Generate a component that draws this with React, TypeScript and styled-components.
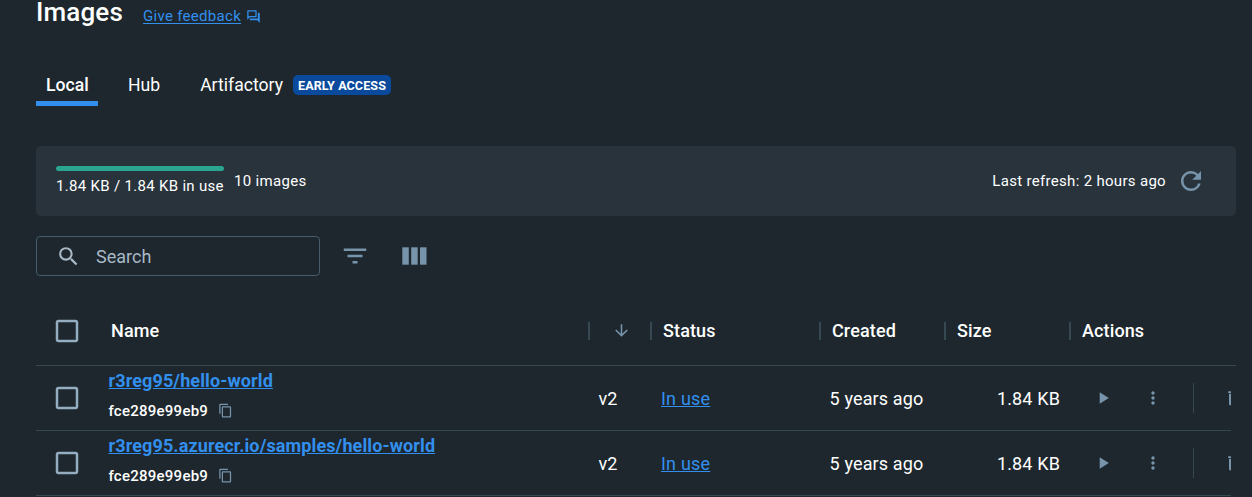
import React from "react";
import styled, { createGlobalStyle, css } from "styled-components";
import {
  MdOutlineQuestionAnswer,
  MdRefresh,
  MdSearch,
  MdFilterList,
  MdCheckBoxOutlineBlank,
  MdArrowDownward,
  MdContentCopy,
  MdPlayArrow,
  MdMoreVert,
  MdDelete,
} from "react-icons/md";

const color = {
  page: "#1d272d",
  panel: "#28333c",
  line: "#364852",
  text: "#ffffff",
  link: "#338fee",
  icon: "#7794ab",
  iconLight: "#94adc0",
  field: "#475c6d",
  hint: "#a9b9c6",
  green: "#2aa58f",
  badge: "#0a4a9c",
};

const GlobalStyle = createGlobalStyle`
  * { box-sizing: border-box; }
  body {
    margin: 0;
    background: ${color.page};
    color: ${color.text};
    font-family: Roboto, "Liberation Sans", sans-serif;
    overflow: hidden;
  }
  svg { display: block; flex: none; }
`;

const Page = styled.main`
  height: 497px;
  padding: 0 16px 0 36px;
  overflow: hidden;
  background: ${color.page};
`;

const Header = styled.header`
  display: flex;
  height: 66px;
  align-items: flex-start;
`;

const Title = styled.h1`
  width: 107px;
  margin: 0;
  font-size: 26px;
  font-weight: 500;
  letter-spacing: 0.15px;
  line-height: 24px;
`;

const Feedback = styled.a`
  display: flex;
  align-items: center;
  gap: 5px;
  height: 31px;
  color: ${color.link};
  font-size: 15px;
  letter-spacing: 0.3px;
  span { text-decoration: underline; text-underline-offset: 2px; }
  svg { position: relative; top: 1px; }
`;

const Tabs = styled.nav`
  display: flex;
  gap: 20px;
  height: 40px;
`;

const Tab = styled.div<{ $active?: boolean }>`
  display: flex;
  align-items: center;
  gap: 10px;
  height: 40px;
  padding: 0 10px 3px;
  font-size: 17.6px;
  ${(p) => p.$active && css`
    width: 62px;
    font-weight: 500;
    box-shadow: inset 0 -5px ${color.link};
  `}
`;

const Badge = styled.span`
  height: 20px;
  padding: 0 5px;
  border-radius: 5px;
  background: ${color.badge};
  font-size: 12.6px;
  font-weight: 700;
  letter-spacing: 0.07px;
  line-height: 21px;
`;

const Summary = styled.section`
  display: flex;
  align-items: center;
  height: 70px;
  margin-top: 40px;
  padding: 0 30px 0 20px;
  border-radius: 5px;
  background: ${color.panel};
  font-size: 15px;
  letter-spacing: 0.31px;
`;

const Usage = styled.div`
  width: 168px;
  margin-right: 10px;
  line-height: 20px;
  white-space: nowrap;
`;

const UsageBar = styled.div`
  height: 5px;
  margin: 0 0 5px;
  border-radius: 3px;
  background: ${color.green};
`;

const Refresh = styled.div`
  display: flex;
  align-items: center;
  gap: 10px;
  margin-left: auto;
  svg { color: ${color.icon}; }
`;

const Toolbar = styled.div`
  display: flex;
  align-items: center;
  height: 40px;
  margin-top: 20px;
  color: ${color.icon};
`;

const SearchField = styled.div`
  display: flex;
  align-items: center;
  gap: 15px;
  width: 284px;
  height: 40px;
  margin-right: 20px;
  padding-left: 19px;
  border: 1px solid ${color.field};
  border-radius: 4px;
  color: ${color.hint};
  font-size: 18px;
`;

const ToolButton = styled.div`
  margin-right: 30px;
`;

const gridColumns = css`
  display: grid;
  grid-template-columns: 62px 490px 62px 169px 125px 125px 1fr;
`;

const HeadRow = styled.div`
  ${gridColumns}
  align-items: center;
  height: 90px;
  padding-top: 20px;
  border-bottom: 1px solid ${color.line};
  font-size: 18px;
  font-weight: 500;
  letter-spacing: 0.12px;
`;

const HeadCell = styled.div<{ $divided?: boolean }>`
  display: flex;
  align-items: center;
  height: 18px;
  padding-left: ${(p) => (p.$divided ? 11 : 13)}px;
  border-left: ${(p) => (p.$divided ? `2px solid ${color.line}` : "0")};
`;

const SortCell = styled(HeadCell)`
  padding-left: 21.5px;
  color: ${color.icon};
`;

const Row = styled.div`
  ${gridColumns}
  align-items: center;
  width: 1195px;
  height: 65px;
  overflow: hidden;
  border-bottom: 1px solid ${color.line};
  font-size: 18px;
`;

const Check = styled.div`
  padding-left: 16px;
  color: ${color.iconLight};
`;

const NameCell = styled.div`
  height: 64px;
  padding: 4px 0 0 10.5px;
`;

const ImageLink = styled.a`
  display: block;
  color: ${color.link};
  font-weight: 700;
  letter-spacing: 0.12px;
  line-height: 22px;
  text-decoration: underline;
`;

const Digest = styled.div`
  display: flex;
  align-items: center;
  gap: 10px;
  height: 20px;
  margin-top: 8px;
  font-size: 15px;
  font-weight: 500;
  letter-spacing: 0.25px;
  line-height: 20px;
  span { padding-top: 2px; }
  svg { color: ${color.icon}; }
`;

const Cell = styled.div<{ $right?: boolean }>`
  padding: 0 ${(p) => (p.$right ? 9 : 0)}px 0 10.5px;
  letter-spacing: 0.15px;
  text-align: ${(p) => (p.$right ? "right" : "left")};
`;

const StatusLink = styled.a`
  margin-left: 0.5px;
  color: ${color.link};
  letter-spacing: 0.2px;
  text-decoration: underline;
`;

const Actions = styled.div`
  display: flex;
  align-items: center;
  color: ${color.icon};
`;

const Action = styled.div<{ $lead: number }>`
  margin-left: ${(p) => p.$lead}px;
`;

const ActionDivider = styled.div`
  flex: none;
  width: 1px;
  height: 30px;
  margin-left: 30px;
  background: ${color.line};
`;

const ColumnsIcon = () => (
  <svg width="30" height="30" viewBox="0 0 30 30" fill="currentColor">
    <rect x="2.3" y="6.3" width="6.5" height="17.4" />
    <rect x="11.2" y="6.3" width="6.5" height="17.4" />
    <rect x="20" y="6.3" width="6.5" height="17.4" />
  </svg>
);

const images = ["r3reg95/hello-world", "r3reg95.azurecr.io/samples/hello-world"];

export default function App() {
  return (
    <Page>
      <GlobalStyle />
      <Header>
        <Title>Images</Title>
        <Feedback>
          <span>Give feedback</span>
          <MdOutlineQuestionAnswer size={15} />
        </Feedback>
      </Header>
      <Tabs>
        <Tab $active>Local</Tab>
        <Tab>Hub</Tab>
        <Tab>
          Artifactory <Badge>EARLY ACCESS</Badge>
        </Tab>
      </Tabs>
      <Summary>
        <Usage>
          <UsageBar />
          1.84 KB / 1.84 KB in use
        </Usage>
        <span>10 images</span>
        <Refresh>
          Last refresh: 2 hours ago
          <MdRefresh size={30} />
        </Refresh>
      </Summary>
      <Toolbar>
        <SearchField>
          <MdSearch size={25} />
          Search
        </SearchField>
        <ToolButton>
          <MdFilterList size={30} />
        </ToolButton>
        <ToolButton>
          <ColumnsIcon />
        </ToolButton>
      </Toolbar>
      <HeadRow>
        <Check>
          <MdCheckBoxOutlineBlank size={30} />
        </Check>
        <HeadCell>Name</HeadCell>
        <SortCell $divided>
          <MdArrowDownward size={19} />
        </SortCell>
        <HeadCell $divided>Status</HeadCell>
        <HeadCell $divided>Created</HeadCell>
        <HeadCell $divided>Size</HeadCell>
        <HeadCell $divided>Actions</HeadCell>
      </HeadRow>
      {images.map((name) => (
        <Row key={name}>
          <Check>
            <MdCheckBoxOutlineBlank size={30} />
          </Check>
          <NameCell>
            <ImageLink>{name}</ImageLink>
            <Digest>
              <span>fce289e99eb9</span>
              <MdContentCopy size={15} />
            </Digest>
          </NameCell>
          <Cell>v2</Cell>
          <Cell>
            <StatusLink>In use</StatusLink>
          </Cell>
          <Cell>5 years ago</Cell>
          <Cell $right>1.84 KB</Cell>
          <Actions>
            <Action $lead={24}>
              <MdPlayArrow size={20} />
            </Action>
            <Action $lead={30}>
              <MdMoreVert size={20} />
            </Action>
            <ActionDivider />
            <Action $lead={30}>
              <MdDelete size={20} />
            </Action>
          </Actions>
        </Row>
      ))}
    </Page>
  );
}
